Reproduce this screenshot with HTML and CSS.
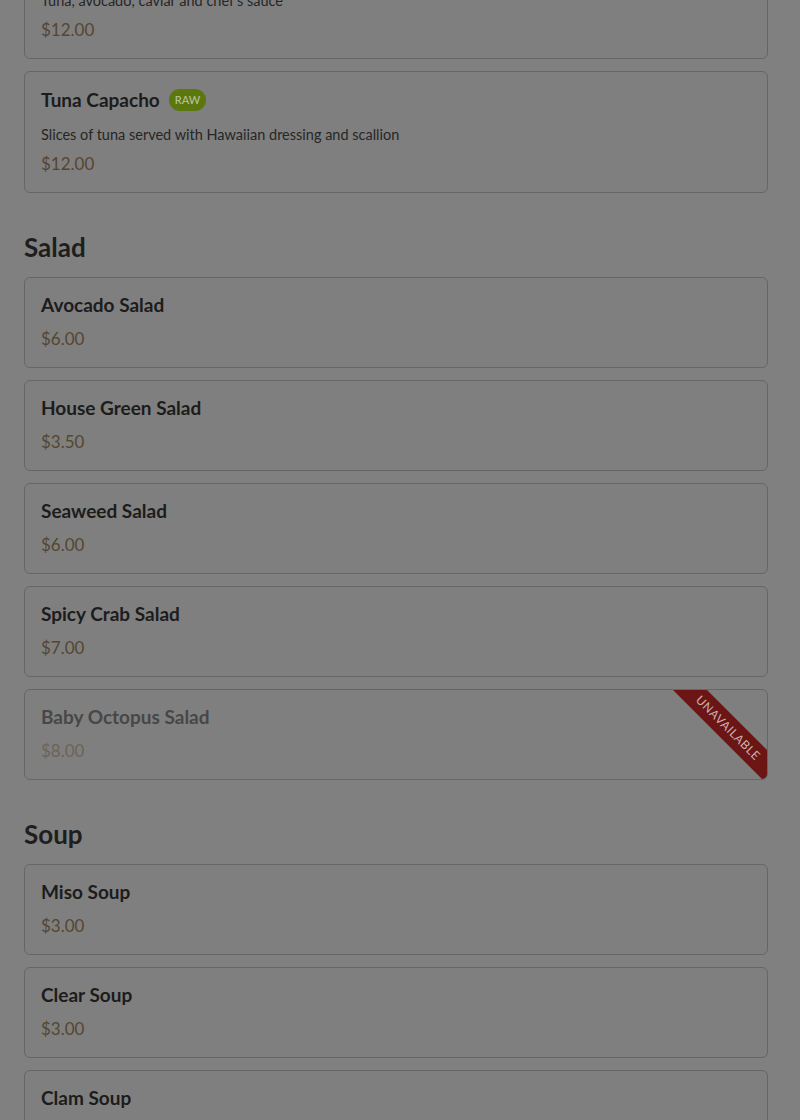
FILE: index.html
```html
<!DOCTYPE html>
<html lang="en">
<head>
<meta charset="utf-8">
<title>Menu</title>
<link rel="stylesheet" href="styles.css">
</head>
<body>
<main class="menu">
  <section class="section section-first">
    <div class="list">
      <article class="card card-cut">
        <p class="desc">Tuna, avocado, caviar and chef's sauce</p>
        <p class="price">$12.00</p>
      </article>
      <article class="card">
        <div class="title-row">
          <h3 class="title">Tuna Capacho</h3>
          <span class="badge">RAW</span>
        </div>
        <p class="desc">Slices of tuna served with Hawaiian dressing and scallion</p>
        <p class="price">$12.00</p>
      </article>
    </div>
  </section>

  <section class="section">
    <h2 class="section-title">Salad</h2>
    <div class="list">
      <article class="card"><h3 class="title">Avocado Salad</h3><p class="price">$6.00</p></article>
      <article class="card"><h3 class="title">House Green Salad</h3><p class="price">$3.50</p></article>
      <article class="card"><h3 class="title">Seaweed Salad</h3><p class="price">$6.00</p></article>
      <article class="card"><h3 class="title">Spicy Crab Salad</h3><p class="price">$7.00</p></article>
      <article class="card card-unavailable">
        <h3 class="title">Baby Octopus Salad</h3><p class="price">$8.00</p>
        <span class="ribbon">Unavailable</span>
      </article>
    </div>
  </section>

  <section class="section">
    <h2 class="section-title">Soup</h2>
    <div class="list">
      <article class="card"><h3 class="title">Miso Soup</h3><p class="price">$3.00</p></article>
      <article class="card"><h3 class="title">Clear Soup</h3><p class="price">$3.00</p></article>
      <article class="card"><h3 class="title">Clam Soup</h3><p class="price">$3.00</p></article>
    </div>
  </section>
</main>
</body>
</html>
```

FILE: styles.css
```css
* { box-sizing: border-box; }
html, body {
  margin: 0;
  padding: 0;
  background: #808080;
  height: 100%;
  overflow: hidden;
}
body {
  font-family: "Lato", "Open Sans", sans-serif;
  color: #1c1c1c;
}
.menu {
  padding: 0 32px 0 24px;
}
.section { margin-top: 38px; }
.section-first { margin-top: -26px; }
.section-title {
  margin: 0 0 14px;
  font-size: 26px;
  line-height: 32px;
  font-weight: 700;
  color: #1e1e1e;
}
.list {
  display: flex;
  flex-direction: column;
  gap: 12px;
}
.card {
  position: relative;
  overflow: hidden;
  border: 1px solid #666;
  border-radius: 6px;
  background: #7f7f7f;
  padding: 16px 16px 17px;
}
.title-row {
  display: flex;
  align-items: center;
  gap: 9px;
  height: 23px;
}
.title {
  margin: 0;
  font-size: 19px;
  line-height: 22px;
  font-weight: 700;
  color: #1c1c1c;
}
.badge {
  display: inline-block;
  background: #5b770d;
  color: #b2bd92;
  font-size: 11px;
  line-height: 22px;
  height: 22px;
  padding: 0 6px;
  border-radius: 11px;
  font-weight: 600;
}
.desc {
  margin: 14px 0 0;
  font-size: 14.5px;
  line-height: 20px;
  color: #262626;
}
.card-cut .desc { margin-top: 0; }
.price {
  margin: 12px 0 0;
  font-size: 17px;
  line-height: 22px;
  color: #55462f;
}
.desc + .price { margin-top: 8px; }
.card-unavailable .title { color: #474747; }
.card-unavailable .price { color: #6c6455; }
.ribbon {
  position: absolute;
  top: 26px;
  right: -44px;
  width: 166px;
  height: 24px;
  line-height: 24px;
  text-align: center;
  transform: rotate(45deg);
  background: #6b1515;
  color: #cdb0b0;
  font-size: 12px;
  text-transform: uppercase;
  letter-spacing: 0.5px;
}
```
